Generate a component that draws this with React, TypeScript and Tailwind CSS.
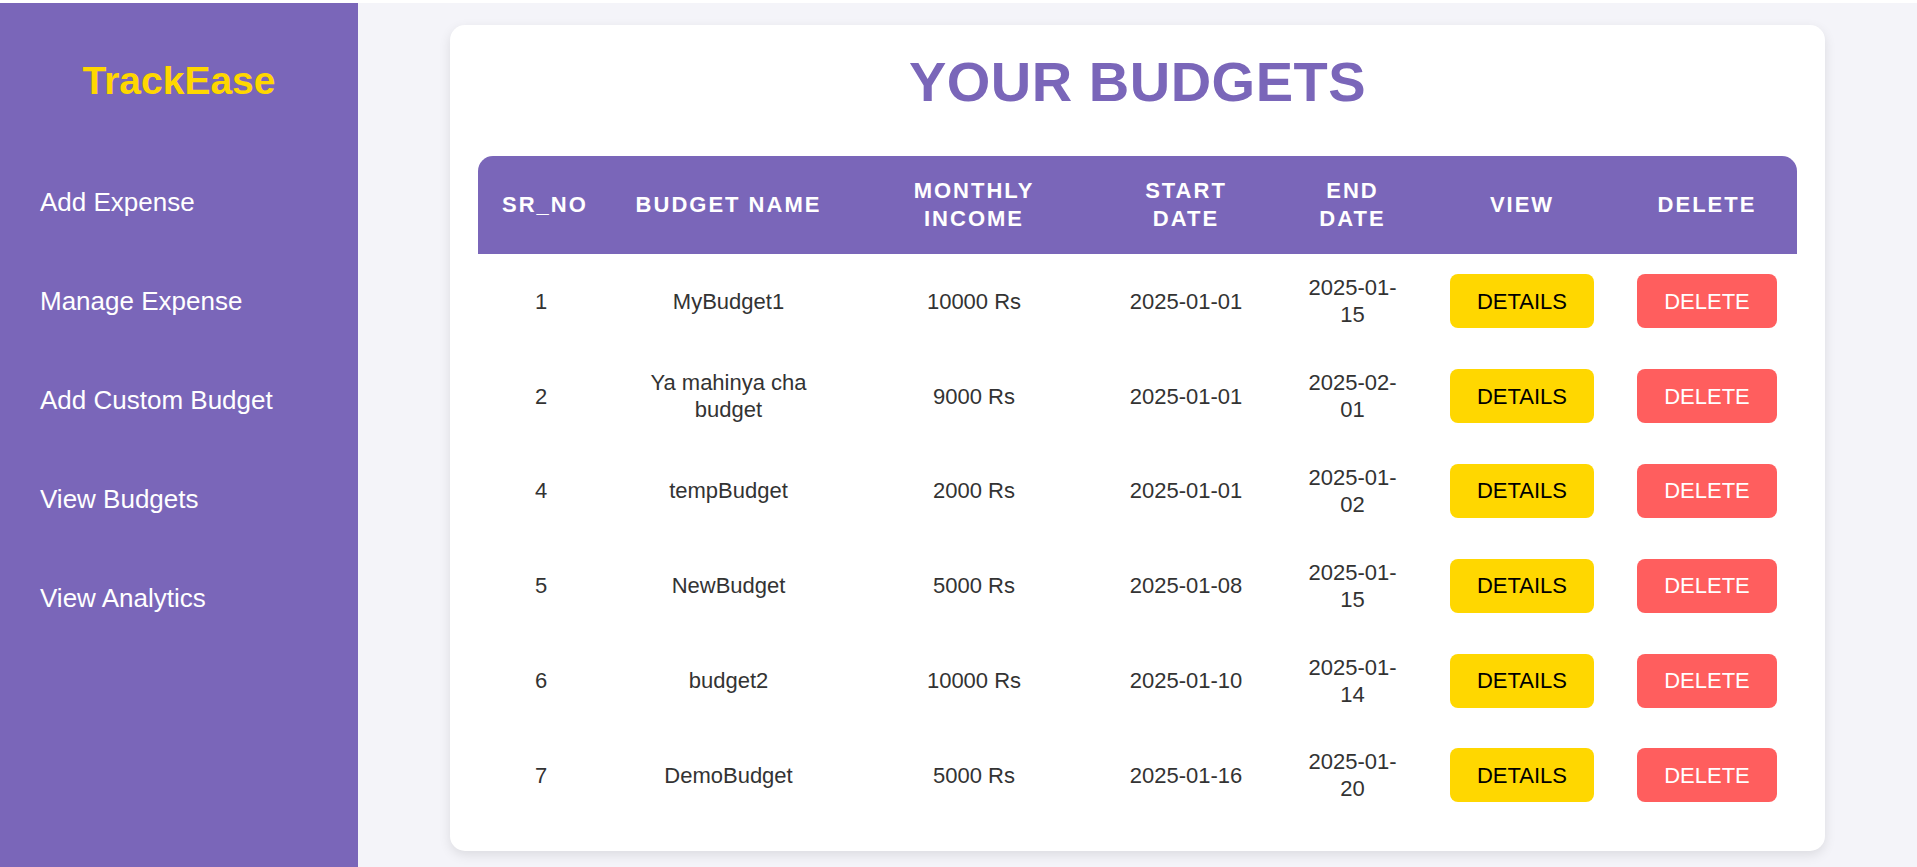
import React from "react";

const rows = [
  { sr: "1", name: "MyBudget1", income: "10000 Rs", start: "2025-01-01", end: "2025-01-15" },
  { sr: "2", name: "Ya mahinya cha budget", income: "9000 Rs", start: "2025-01-01", end: "2025-02-01" },
  { sr: "4", name: "tempBudget", income: "2000 Rs", start: "2025-01-01", end: "2025-01-02" },
  { sr: "5", name: "NewBudget", income: "5000 Rs", start: "2025-01-08", end: "2025-01-15" },
  { sr: "6", name: "budget2", income: "10000 Rs", start: "2025-01-10", end: "2025-01-14" },
  { sr: "7", name: "DemoBudget", income: "5000 Rs", start: "2025-01-16", end: "2025-01-20" },
];

const navItems = ["Add Expense", "Manage Expense", "Add Custom Budget", "View Budgets", "View Analytics"];

export default function App() {
  return (
    <div
      className="w-[1917px] h-[867px] bg-white pt-[3px] flex overflow-hidden"
      style={{ fontFamily: '"Liberation Sans", Arial, Helvetica, sans-serif' }}
    >
      <aside className="w-[358px] shrink-0 bg-[#7a66b9] flex flex-col">
        <div className="pt-[55px] text-center text-[39px] leading-[45px] font-bold text-[#ffd700]">
          TrackEase
        </div>
        <nav className="mt-[84px] flex flex-col gap-[69px] pl-[40px]">
          {navItems.map((n) => (
            <a key={n} className="text-white text-[26px] leading-[30px] cursor-pointer">
              {n}
            </a>
          ))}
        </nav>
      </aside>
      <main className="flex-1 bg-[#f4f4f9] pt-[22px]">
        <div className="w-[1375px] mx-auto bg-white rounded-[15px] shadow-[0_4px_12px_rgba(0,0,0,0.1)] px-[28px] pt-[25px] pb-[28px]">
          <h1 className="text-center text-[56px] leading-[64px] font-bold tracking-[0.5px] text-[#7a66b9] mb-[42px]">
            YOUR BUDGETS
          </h1>
          <div className="rounded-t-[15px] overflow-hidden">
            <table className="w-[1320px] table-fixed border-collapse text-[22px] leading-[27px] text-[#333]">
              <colgroup>
                <col className="w-[126px]" />
                <col className="w-[249px]" />
                <col className="w-[242px]" />
                <col className="w-[182px]" />
                <col className="w-[151px]" />
                <col className="w-[188px]" />
                <col className="w-[182px]" />
              </colgroup>
              <thead>
                <tr className="bg-[#7a66b9] text-white">
                  {["SR_NO", "BUDGET NAME", "MONTHLY INCOME", "START DATE", "END DATE", "VIEW", "DELETE"].map((h) => (
                    <th
                      key={h}
                      className="px-[24px] py-[21px] leading-[28px] font-bold tracking-[2px] text-center align-middle"
                    >
                      {h}
                    </th>
                  ))}
                </tr>
              </thead>
              <tbody>
                {rows.map((r) => (
                  <tr key={r.sr}>
                    <td className="px-[24px] py-[20.4px] text-center align-middle">{r.sr}</td>
                    <td className="px-[24px] py-[20.4px] text-center align-middle">{r.name}</td>
                    <td className="px-[24px] py-[20.4px] text-center align-middle">{r.income}</td>
                    <td className="px-[24px] py-[20.4px] text-center align-middle">{r.start}</td>
                    <td className="px-[24px] py-[20.4px] text-center align-middle break-words">{r.end}</td>
                    <td className="px-0 py-[20.4px] align-middle">
                      <div className="flex justify-center">
                        <button className="h-[54px] px-[27px] rounded-[8px] bg-[#ffd700] text-black text-[22px] leading-[27px]">
                          DETAILS
                        </button>
                      </div>
                    </td>
                    <td className="px-0 py-[20.4px] align-middle">
                      <div className="flex justify-center">
                        <button className="h-[54px] px-[27px] rounded-[8px] bg-[#ff5e5e] text-white text-[22px] leading-[27px]">
                          DELETE
                        </button>
                      </div>
                    </td>
                  </tr>
                ))}
              </tbody>
            </table>
          </div>
        </div>
      </main>
    </div>
  );
}
